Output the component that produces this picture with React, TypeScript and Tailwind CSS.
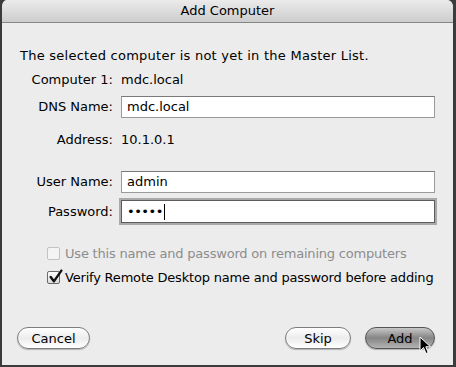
import React from 'react';

const font = { fontFamily: '"DejaVu Sans", "Noto Sans", sans-serif' };

function Field({ value, focused }: { value: React.ReactNode; focused?: boolean }) {
  return (
    <div
      className={
        focused
          ? 'flex h-[23px] items-center border border-[#5c5c5c] bg-white pl-[5px] shadow-[0_0_0_2px_#a9a9a9] text-[13px]'
          : 'flex h-[22px] items-center border border-[#9a9a9a] border-t-[#7a7a7a] bg-white pl-[5px] text-[13px]'
      }
    >
      {value}
    </div>
  );
}

function Pill({ label, width, dark }: { label: string; width: string; dark?: boolean }) {
  return (
    <button
      className={
        (dark
          ? 'bg-gradient-to-b from-[#c8c8c8] via-[#858585] to-[#b4b4b4] border-[#555555] '
          : 'bg-gradient-to-b from-[#ffffff] via-[#ececec] to-[#ffffff] border-[#7d7d7d] ') +
        width +
        ' h-[22px] rounded-full border text-[13px] leading-none text-black shadow-[0_1px_1px_rgba(0,0,0,0.25)]'
      }
    >
      {label}
    </button>
  );
}

export default function App() {
  return (
    <div className="h-[367px] w-[456px] bg-[#3c3c3c]" style={font}>
      <div className="flex h-[365px] w-[454px] flex-col overflow-hidden rounded-t-[7px] border-l-2 border-r border-[#3a3a3a] bg-[#ececec]">
        {/* Title bar */}
        <div className="flex h-[23px] shrink-0 items-center justify-center border-b border-[#858585] bg-gradient-to-b from-[#ebebeb] to-[#cdcdcd] text-[13px] text-black">
          Add Computer
        </div>

        <div className="flex flex-1 flex-col pl-[18px] pr-[18px] text-[13px] text-black">
          <p className="mt-[24px] leading-[18px] tracking-[0.25px]">The selected computer is not yet in the Master List.</p>

          <div className="mt-[6px] grid grid-cols-[93px_1fr] items-center gap-x-[8px]">
            <span className="text-right leading-[18px]">Computer 1:</span>
            <span className="leading-[18px]">mdc.local</span>

            <span className="mt-[7px] text-right">DNS Name:</span>
            <div className="mt-[7px]">
              <Field value="mdc.local" />
            </div>

            <span className="mt-[13px] text-right leading-[18px]">Address:</span>
            <span className="mt-[13px] leading-[18px]">10.1.0.1</span>

            <span className="mt-[22px] text-right">User Name:</span>
            <div className="mt-[22px]">
              <Field value="admin" />
            </div>

            <span className="mt-[7px] text-right">Password:</span>
            <div className="mt-[7px]">
              <Field
                focused
                value={
                  <span className="flex items-center">
                    <span className="text-[13px] leading-none tracking-[-0.5px]">•••••</span>
                    <span className="ml-[1px] h-[16px] w-px bg-black" />
                  </span>
                }
              />
            </div>
          </div>

          <div className="mt-[21px] flex flex-col gap-[4px] pl-[27px] tracking-[-0.2px]">
            <label className="flex items-center gap-[5px] whitespace-nowrap text-[#8c8c8c]">
              <span className="h-[13px] w-[13px] shrink-0 rounded-[2px] border border-[#c2c2c2] bg-[#f4f4f4]" />
              Use this name and password on remaining computers
            </label>
            <label className="flex items-center gap-[5px] whitespace-nowrap">
              <span className="relative h-[13px] w-[13px] shrink-0 rounded-[2px] border border-[#6a6a6a] bg-gradient-to-b from-white to-[#dcdcdc]">
                <svg viewBox="0 0 14 14" className="absolute -top-[3px] left-0 h-[15px] w-[15px]">
                  <path d="M2.5 7.5 L5.5 11.5 L12.5 1.5" fill="none" stroke="#111" strokeWidth="2.2" strokeLinecap="round" strokeLinejoin="round" />
                </svg>
              </span>
              Verify Remote Desktop name and password before adding
            </label>
          </div>

          <div className="mt-auto mb-[16px] flex items-center">
            <div className="ml-[-3px]">
              <Pill label="Cancel" width="w-[73px]" />
            </div>
            <div className="ml-auto flex gap-[14px]">
              <Pill label="Skip" width="w-[66px]" />
              <div className="relative">
                <Pill label="Add" width="w-[70px]" dark />
                <svg viewBox="0 0 12 19" className="absolute left-[54px] top-[9px] h-[19px] w-[12px]">
                  <path d="M1 1 L1 15 L4.5 11.5 L7 17.5 L9.2 16.6 L6.8 10.8 L11.5 10.8 Z" fill="#000" stroke="#fff" strokeWidth="1" strokeLinejoin="round" />
                </svg>
              </div>
            </div>
          </div>
        </div>
      </div>
    </div>
  );
}
